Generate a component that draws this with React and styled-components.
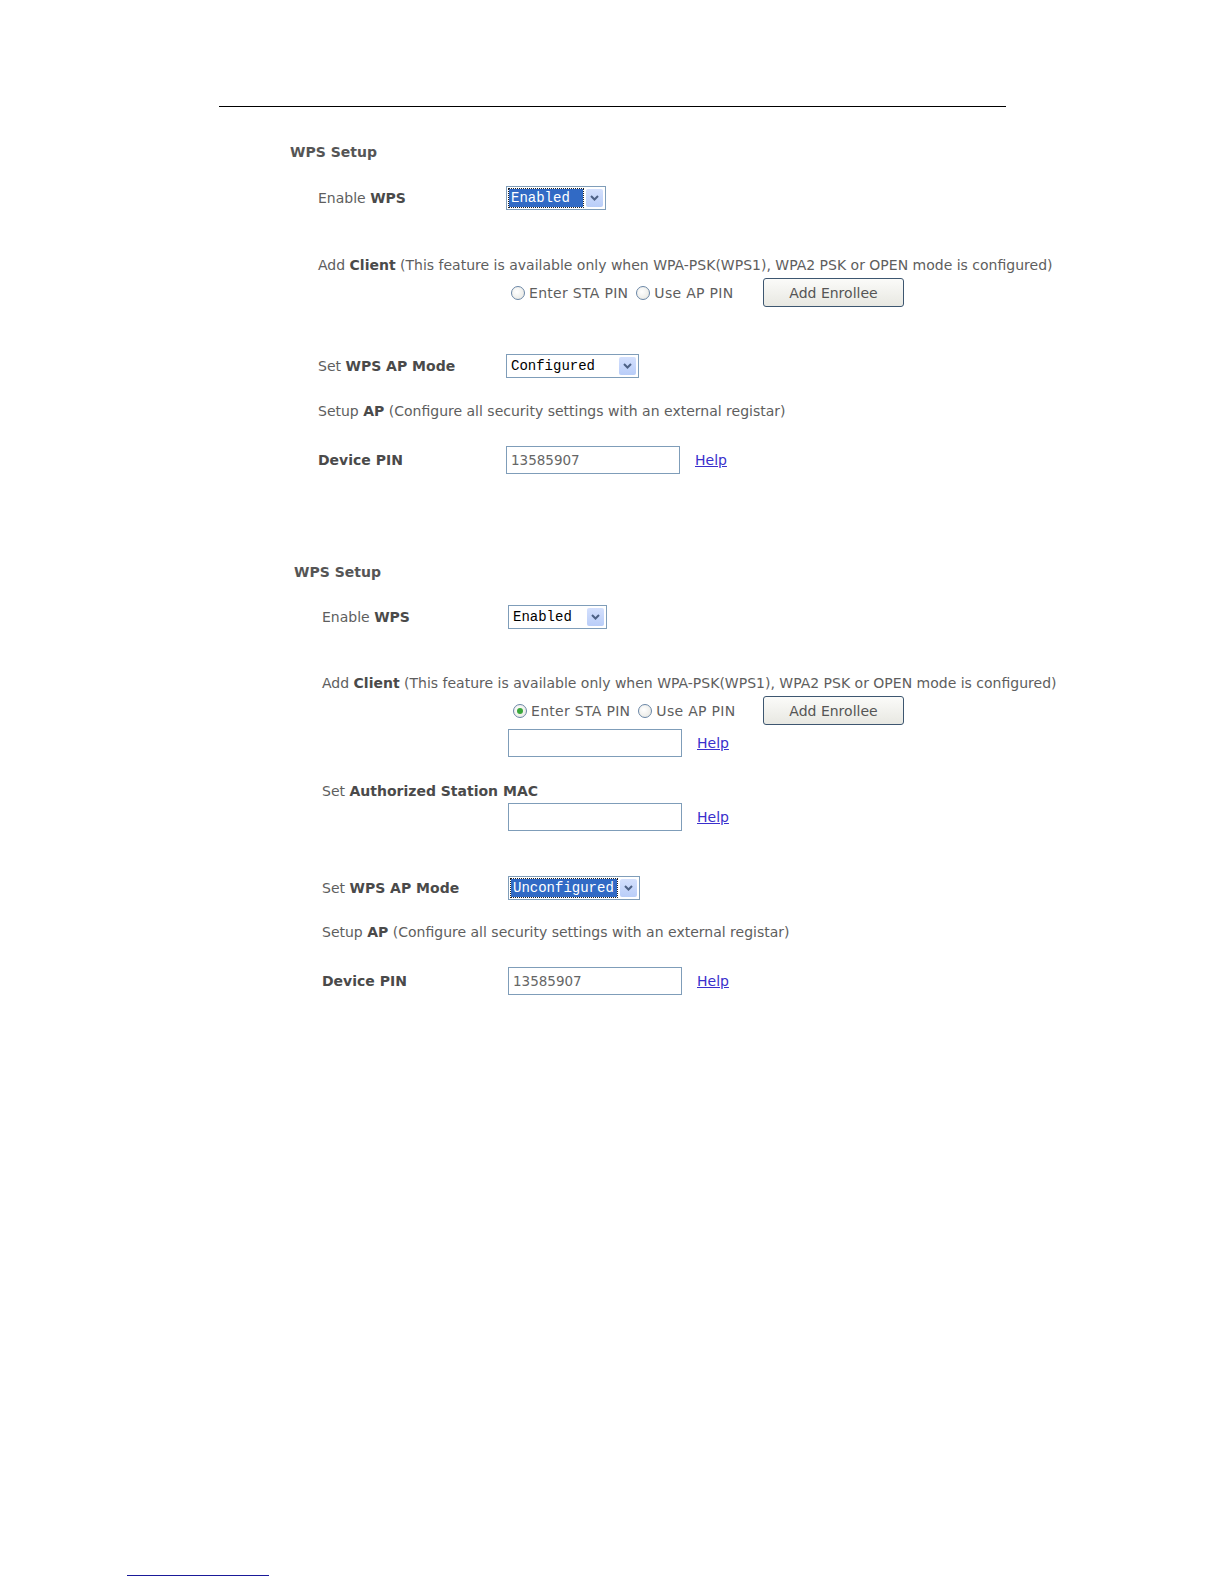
import React from "react";
import styled, { createGlobalStyle } from "styled-components";

const GlobalStyle = createGlobalStyle`
  body {
    margin: 0;
    background: #fff;
  }
`;

const Page = styled.div`
  width: 1224px;
  min-height: 1584px;
  display: flex;
  flex-direction: column;
  font-family: "DejaVu Sans", Tahoma, sans-serif;
  font-size: 14px;
  color: #5e5e5e;
`;

const TopRule = styled.div`
  margin: 106px 0 0 219px;
  width: 787px;
  border-top: 1px solid #000;
`;

const Section = styled.div`
  padding-left: ${(p) => p.$x}px;
`;

const Heading = styled.div`
  height: 20px;
  line-height: 20px;
  margin-top: ${(p) => p.$mt}px;
  font-weight: bold;
  color: #555;
`;

const Row = styled.div`
  display: flex;
  align-items: center;
  height: ${(p) => p.$h || 20}px;
  margin-top: ${(p) => p.$mt}px;
  padding-left: 28px;
  white-space: nowrap;
`;

const Label = styled.div`
  width: ${(p) => p.$w}px;
  flex: none;
`;

const Strong = styled.b`
  color: #4a4a4a;
`;

const Select = styled.div`
  width: ${(p) => p.$w}px;
  height: 24px;
  box-sizing: border-box;
  border: 1px solid #7f9db9;
  display: flex;
  align-items: center;
  gap: 3px;
  padding: 2px;
  background: #fff;
`;

const SelectValue = styled.span`
  flex: 1;
  height: 18px;
  line-height: 18px;
  padding: 0 2px;
  font-family: "Liberation Mono", "Courier New", monospace;
  font-size: 14px;
  color: ${(p) => (p.$focus ? "#fff" : "#000")};
  background: ${(p) => (p.$focus ? "#316ac5" : "transparent")};
  outline: ${(p) => (p.$focus ? "1px dotted #222" : "none")};
`;

const ArrowButton = styled.span`
  width: 17px;
  height: 18px;
  flex: none;
  display: flex;
  align-items: center;
  justify-content: center;
  background: linear-gradient(#d4e0fd, #b9cdf8);
  border-radius: 2px;
`;

const RadioGroup = styled.div`
  width: ${(p) => p.$w}px;
  flex: none;
  display: flex;
  align-items: center;
  padding-left: 5px;
  box-sizing: border-box;
`;

const Radio = styled.span`
  width: 14px;
  height: 14px;
  box-sizing: border-box;
  border-radius: 50%;
  border: 1px solid #6a86a6;
  background: radial-gradient(circle at 40% 40%, #fff, #e4e4de);
  display: inline-flex;
  align-items: center;
  justify-content: center;
  margin-right: 4px;
  &::after {
    content: "";
    width: 6px;
    height: 6px;
    border-radius: 50%;
    background: ${(p) => (p.$on ? "#3ba73b" : "transparent")};
  }
`;

const RadioText = styled.span`
  margin-right: 8px;
  letter-spacing: 0.3px;
`;

const Button = styled.div`
  width: 141px;
  height: 29px;
  box-sizing: border-box;
  border: 1px solid #3d5670;
  border-radius: 3px;
  background: linear-gradient(#fbfbf9, #e8e8e2);
  display: flex;
  align-items: center;
  justify-content: center;
  color: #555;
`;

const TextBox = styled.div`
  width: 174px;
  height: 28px;
  box-sizing: border-box;
  border: 1px solid #7f9db9;
  padding-left: 4px;
  display: flex;
  align-items: center;
  font-size: 13.5px;
  color: #666;
`;

const Help = styled.a`
  margin-left: 15px;
  color: #3a2fcc;
  text-decoration: underline;
`;

const BottomRule = styled.div`
  margin: auto 0 8px 127px;
  width: 142px;
  border-top: 1px solid #1a1a99;
`;

const Chevron = () => (
  <svg width="9" height="6" viewBox="0 0 9 6">
    <path d="M1 1 L4.5 4.5 L8 1" stroke="#4d6185" strokeWidth="2" fill="none" />
  </svg>
);

const Dropdown = ({ w, value, focus }) => (
  <Select $w={w}>
    <SelectValue $focus={focus}>{value}</SelectValue>
    <ArrowButton>
      <Chevron />
    </ArrowButton>
  </Select>
);

const PinInput = ({ value }) => (
  <>
    <TextBox>{value}</TextBox>
    <Help href="#">Help</Help>
  </>
);

// the enrollee button sits at a fixed x on the page in both sections
const BUTTON_X = 763;

const AddClient = ({ x, col, staOn, mt }) => (
  <>
    <Row $mt={mt}>
      <span>
        Add <Strong>Client</Strong> (This feature is available only when
        WPA-PSK(WPS1), WPA2 PSK or OPEN mode is configured)
      </span>
    </Row>
    <Row $mt={3} $h={29}>
      <Label $w={col} />
      <RadioGroup $w={BUTTON_X - (x + 28 + col)}>
        <Radio $on={staOn} />
        <RadioText>Enter STA PIN</RadioText>
        <Radio />
        <RadioText>Use AP PIN</RadioText>
      </RadioGroup>
      <Button>Add Enrollee</Button>
    </Row>
  </>
);

export default function App() {
  return (
    <Page>
      <GlobalStyle />
      <TopRule />

      <Section $x={290}>
        <Heading $mt={35}>WPS Setup</Heading>
        <Row $mt={24} $h={24}>
          <Label $w={188}>
            Enable <Strong>WPS</Strong>
          </Label>
          <Dropdown w={100} value="Enabled" focus />
        </Row>
        <AddClient x={290} col={188} mt={45} />
        <Row $mt={46} $h={25}>
          <Label $w={188}>
            Set <Strong>WPS AP Mode</Strong>
          </Label>
          <Dropdown w={133} value="Configured" />
        </Row>
        <Row $mt={23}>
          <span>
            Setup <Strong>AP</Strong> (Configure all security settings with an
            external registar)
          </span>
        </Row>
        <Row $mt={25} $h={28}>
          <Label $w={188}>
            <Strong>Device PIN</Strong>
          </Label>
          <PinInput value="13585907" />
        </Row>
      </Section>

      <Section $x={294}>
        <Heading $mt={88}>WPS Setup</Heading>
        <Row $mt={22} $h={25}>
          <Label $w={186}>
            Enable <Strong>WPS</Strong>
          </Label>
          <Dropdown w={99} value="Enabled" />
        </Row>
        <AddClient x={294} col={186} staOn mt={44} />
        <Row $mt={4} $h={28}>
          <Label $w={186} />
          <PinInput />
        </Row>
        <Row $mt={24}>
          <span>
            Set <Strong>Authorized Station MAC</Strong>
          </span>
        </Row>
        <Row $mt={2} $h={28}>
          <Label $w={186} />
          <PinInput />
        </Row>
        <Row $mt={45} $h={24}>
          <Label $w={186}>
            Set <Strong>WPS AP Mode</Strong>
          </Label>
          <Dropdown w={132} value="Unconfigured" focus />
        </Row>
        <Row $mt={22}>
          <span>
            Setup <Strong>AP</Strong> (Configure all security settings with an
            external registar)
          </span>
        </Row>
        <Row $mt={24} $h={29}>
          <Label $w={186}>
            <Strong>Device PIN</Strong>
          </Label>
          <PinInput value="13585907" />
        </Row>
      </Section>

      <BottomRule />
    </Page>
  );
}
